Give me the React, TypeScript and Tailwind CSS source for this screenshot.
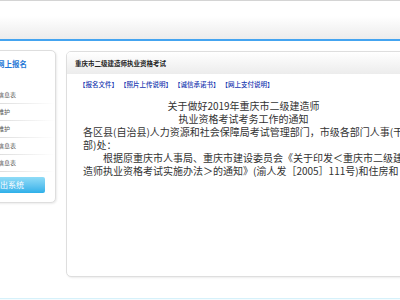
const font = { fontFamily: '"Noto Sans CJK SC", "Noto Sans", sans-serif' }

const menuItems = ['打印报名信息表', '个人信息维护', '报考信息维护', '查看审核信息表', '打印缴费信息表']

const links = ['【报名文件】', '【照片上传说明】', '【诚信承诺书】', '【网上支付说明】']

export default function App() {
  return (
    <div className="w-[400px] h-[300px] overflow-hidden bg-white flex flex-col" style={font}>
      {/* top header */}
      <div className="h-[41px] shrink-0 border-t border-[#d4d4d4] border-b-2 border-b-[#44a4f0] bg-gradient-to-b from-white from-40% to-[#ececec]" />

      <div className="flex items-start pt-[9px] h-[257px] shrink-0">
        {/* left menu panel */}
        <div className="w-[120px] -ml-[64px] shrink-0 h-[153px] border border-[#dedede] rounded-[5px] shadow-[1px_1px_2px_rgba(0,0,0,0.08)] bg-white flex flex-col">
          <div className="h-[25px] flex items-center pl-[60px] text-[7.5px] font-bold text-[#1f78d6] leading-none">网上报名</div>
          <div className="mt-[11px] flex flex-col">
            {menuItems.map((item, i) => (
              <div key={i} className="h-[17px] flex flex-col">
                <div className="flex-1 flex items-center pl-[37px] text-[6px] text-[#555] leading-none whitespace-nowrap">{item}</div>
                <div className="h-px bg-gradient-to-r from-[#cfcfcf] via-[#dcdcdc] to-white" />
              </div>
            ))}
          </div>
          <div className="mt-[5px] ml-[34px] w-[74px] h-[16px] rounded-[2px] bg-gradient-to-b from-[#8fdcf7] to-[#2cb0e9] flex items-center justify-center text-[8px] text-white leading-none whitespace-nowrap">
            退出系统
          </div>
        </div>

        {/* main panel */}
        <div className="ml-[10px] mt-px w-[355px] shrink-0 h-[226px] border border-[#dedede] rounded-[5px] shadow-[1px_1px_2px_rgba(0,0,0,0.08)] bg-white flex flex-col overflow-hidden">
          <div className="h-[22px] shrink-0 flex items-center pl-[8px] bg-gradient-to-b from-white to-[#ececec] text-[6.5px] font-bold text-[#222] leading-none whitespace-nowrap">
            重庆市二级建造师执业资格考试
          </div>
          <div className="pl-[12px] pt-[7px] flex gap-[2px] text-[6.5px] font-medium text-[#1838b0] leading-none whitespace-nowrap">
            {links.map((l) => (
              <span key={l}>{l}</span>
            ))}
          </div>
          <div className="pl-[16px] w-[337px] mt-[11px] text-[10px] leading-[13px] text-[#333]">
            <div className="text-center whitespace-nowrap">关于做好2019年重庆市二级建造师</div>
            <div className="text-center whitespace-nowrap">执业资格考试考务工作的通知</div>
            <div className="whitespace-nowrap">各区县(自治县)人力资源和社会保障局考试管理部门，市级各部门人事(干</div>
            <div className="whitespace-nowrap">部)处：</div>
            <div className="whitespace-nowrap pl-[20px]">根据原重庆市人事局、重庆市建设委员会《关于印发＜重庆市二级建</div>
            <div className="whitespace-nowrap">造师执业资格考试实施办法＞的通知》(渝人发［2005］111号)和住房和</div>
          </div>
        </div>
      </div>

      {/* footer */}
      <div className="flex-1 border-t border-[#d6f1fa] bg-[#f4fcff]" />
    </div>
  )
}
